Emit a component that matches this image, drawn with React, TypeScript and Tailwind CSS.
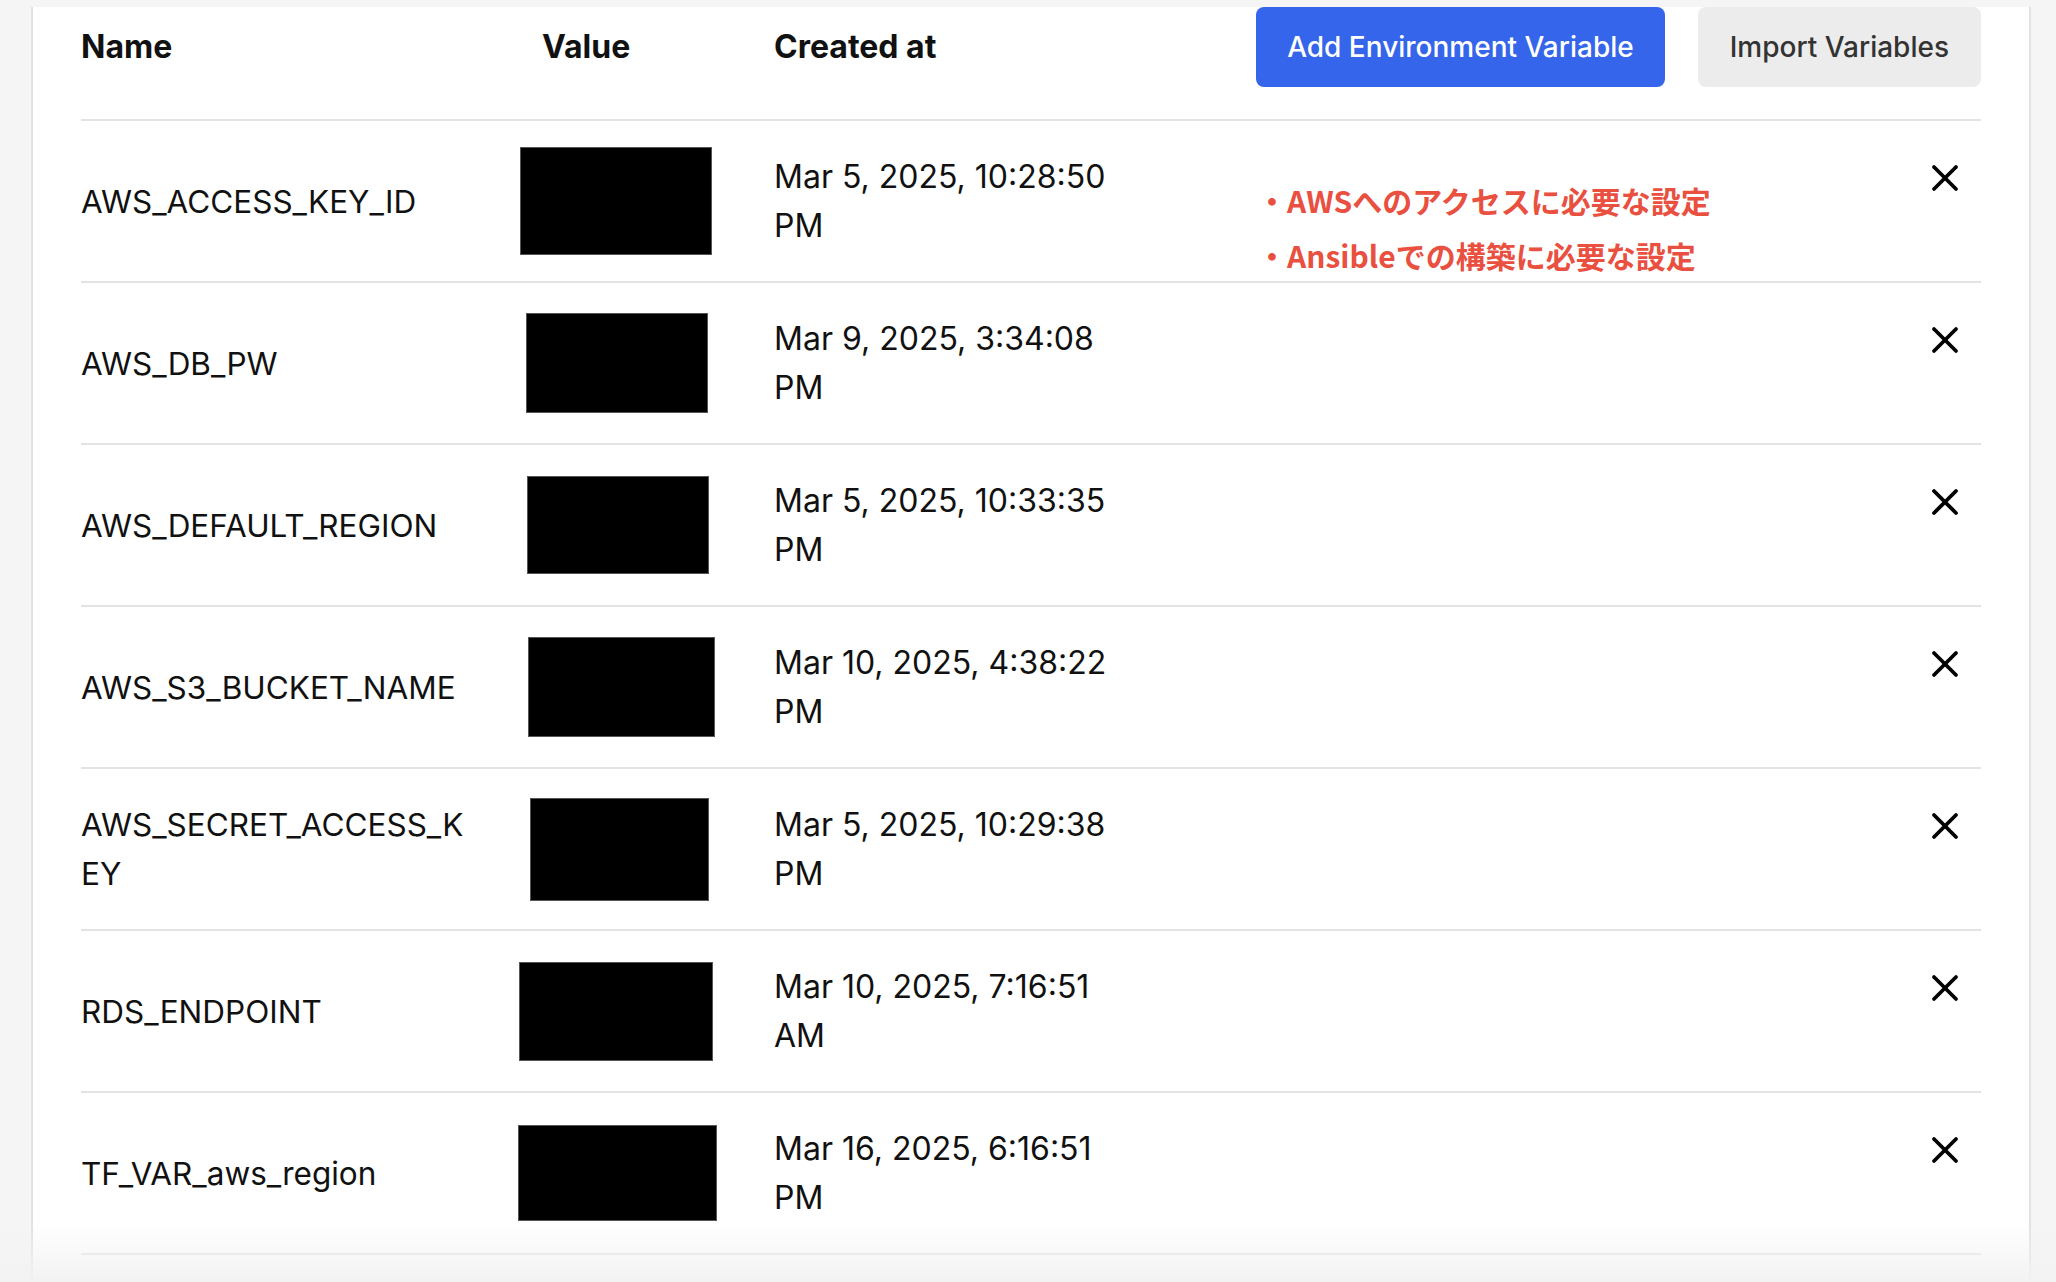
import { Fragment } from 'react'

type EnvVar = {
  name: string
  createdAt: string
  box: { ml: string; w: string; h: string }
}

const vars: EnvVar[] = [
  { name: 'AWS_ACCESS_KEY_ID', createdAt: 'Mar 5, 2025, 10:28:50 PM', box: { ml: 'ml-[49px]', w: 'w-[192px]', h: 'h-[108px]' } },
  { name: 'AWS_DB_PW', createdAt: 'Mar 9, 2025, 3:34:08 PM', box: { ml: 'ml-[55px]', w: 'w-[182px]', h: 'h-[100px]' } },
  { name: 'AWS_DEFAULT_REGION', createdAt: 'Mar 5, 2025, 10:33:35 PM', box: { ml: 'ml-[56px]', w: 'w-[182px]', h: 'h-[98px]' } },
  { name: 'AWS_S3_BUCKET_NAME', createdAt: 'Mar 10, 2025, 4:38:22 PM', box: { ml: 'ml-[57px]', w: 'w-[187px]', h: 'h-[100px]' } },
  { name: 'AWS_SECRET_ACCESS_KEY', createdAt: 'Mar 5, 2025, 10:29:38 PM', box: { ml: 'ml-[59px]', w: 'w-[179px]', h: 'h-[103px]' } },
  { name: 'RDS_ENDPOINT', createdAt: 'Mar 10, 2025, 7:16:51 AM', box: { ml: 'ml-[48px]', w: 'w-[194px]', h: 'h-[99px]' } },
  { name: 'TF_VAR_aws_region', createdAt: 'Mar 16, 2025, 6:16:51 PM', box: { ml: 'ml-[47px]', w: 'w-[199px]', h: 'h-[96px]' } },
]

function CloseIcon() {
  return (
    <svg width="30" height="30" viewBox="0 0 30 30" fill="none" stroke="currentColor" strokeWidth="3.8" strokeLinecap="round">
      <path d="M4 4 L26 26" />
      <path d="M26 4 L4 26" />
    </svg>
  )
}

function Annotation() {
  return (
    <div
      className="absolute left-[1176px] top-[52px] text-[30px] leading-[55px] font-bold text-[#e9503f] pointer-events-none"
      style={{ fontFamily: '"Noto Sans CJK JP", "Noto Sans", sans-serif' }}
    >
      <div>・AWSへのアクセスに必要な設定</div>
      <div>・Ansibleでの構築に必要な設定</div>
    </div>
  )
}

export default function App() {
  return (
    <div
      className="relative h-[1282px] overflow-hidden bg-[#f5f5f5] text-[#111111]"
      style={{ fontFamily: 'Inter, "Noto Sans", sans-serif' }}
    >
      <div className="ml-[31px] w-[2000px] h-full bg-white border-x-2 border-[#e2e2e2] px-[48px]">
        {/* header */}
        <div className="flex items-center h-[80px] mt-[7px] mb-[32px] text-[32px] font-bold">
          <div className="w-[390px]">Name</div>
          <div className="w-[303px] pl-[71px]">Value</div>
          <div>Created at</div>
          <div className="flex-1" />
          <button
            type="button"
            className="h-[80px] px-[31px] rounded-[8px] bg-[#3565ea] text-white text-[28px] font-medium"
          >
            Add Environment Variable
          </button>
          <button
            type="button"
            className="ml-[33px] h-[80px] px-[32px] rounded-[8px] bg-[#ececec] text-[#333333] text-[28px] font-medium"
          >
            Import Variables
          </button>
        </div>
        <div className="border-t-2 border-[#e3e3e3]" />

        {vars.map((v, i) => (
          <Fragment key={v.name}>
            <div className="relative flex items-center h-[160px] text-[32px] leading-[49px]">
              <div className="w-[390px] text-[31.5px] break-all">{v.name}</div>
              <div className="w-[303px]">
                <div className={`${v.box.ml} ${v.box.w} ${v.box.h} bg-black border border-[#555555]`} />
              </div>
              <div className="w-[360px]">{v.createdAt}</div>
              <div className="flex-1" />
              <button type="button" className="self-start mt-[42px] mr-[21px] text-black">
                <CloseIcon />
              </button>
              {i === 0 && <Annotation />}
            </div>
            <div className="border-t-2 border-[#e3e3e3]" />
          </Fragment>
        ))}
      </div>
      <div className="absolute left-0 right-0 bottom-0 h-[57px] bg-gradient-to-b from-white/0 to-[#f2f2f2] pointer-events-none" />
    </div>
  )
}
